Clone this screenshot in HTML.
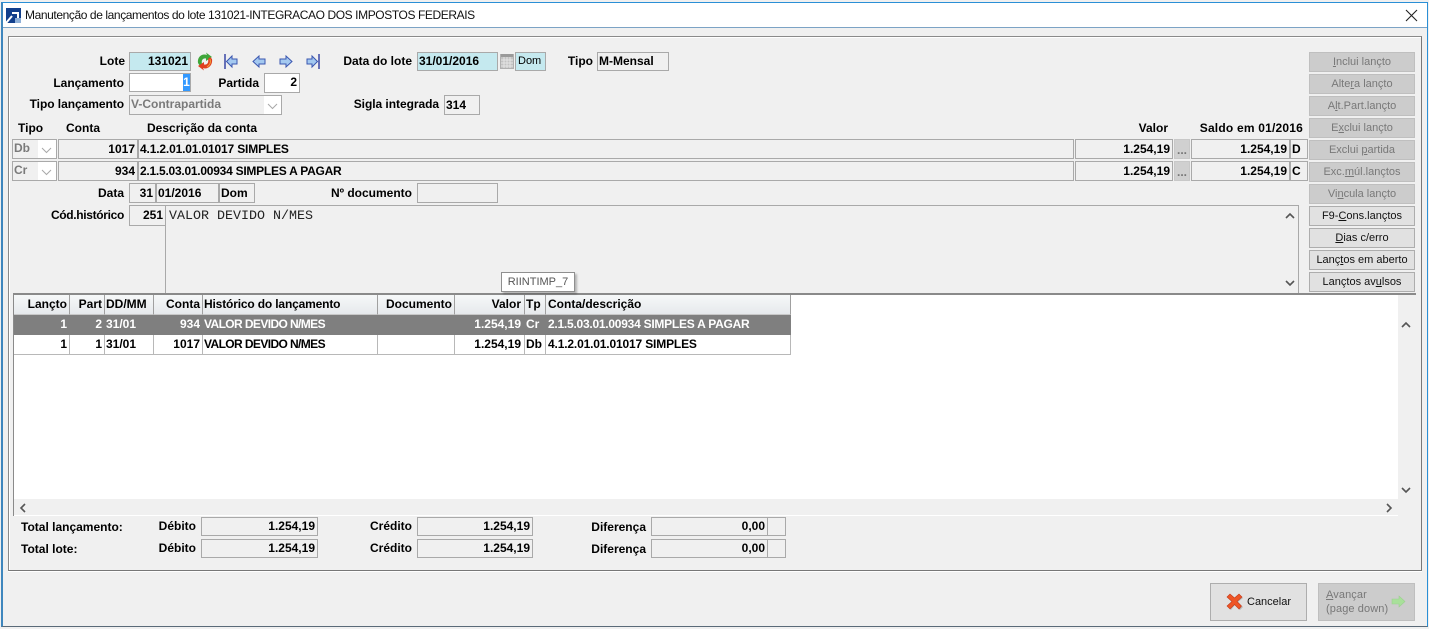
<!DOCTYPE html>
<html><head><meta charset="utf-8"><style>
html,body{margin:0;padding:0;background:#f0f0f0}
#w{position:relative;width:1429px;height:629px;overflow:hidden;background:#f0f0f0;font:bold 12px "Liberation Sans",sans-serif;color:#000}
#w div,#w svg{position:absolute;box-sizing:border-box}
.t{white-space:nowrap;line-height:14px}
.r{text-align:right}
.f{border:1px solid #a9a9a9;background:#f0f0f0;white-space:nowrap;line-height:16px;padding:0 2px 0 1px;overflow:hidden}
.y{line-height:18px}
.c{background:#c5e9ef}
.b{left:1309px;width:106px;height:20px;border:1px solid #adadad;background:#e1e1e1;text-align:center;font-weight:normal;font-size:11px;line-height:18px;color:#111}
.d{background:#cccccc;border-color:#bfbfbf;color:#787878}
.h{top:295px;height:20px;background:linear-gradient(#f6f8f9,#e6e9ec);border-right:1px solid #a0a0a0;border-bottom:1px solid #c8c8c8;line-height:18px;padding:0 2px 0 1px;white-space:nowrap;overflow:hidden}
.g{height:20px;border-right:1px solid #b8b8b8;border-bottom:1px solid #b8b8b8;line-height:18px;padding:0 2px 0 1px;white-space:nowrap;overflow:hidden;background:#fff}
.s{background:#7f7f7f;color:#fff;border-color:#7f7f7f}
.ar{text-align:right}
.n1{letter-spacing:-.16px}
.n2{letter-spacing:-.25px}
.n3{letter-spacing:-.6px}
</style></head><body><div id="w">
<!-- window -->
<div style="left:1px;top:2px;width:1427px;height:625px;border:1px solid #2a8fd6;border-bottom-color:#5a6a78;border-left-width:2px;border-left-color:#3e86bd"></div>
<div style="left:3px;top:3px;width:1424px;height:25px;background:#fff;border-bottom:1px solid #7ca3c5"></div>
<svg style="left:6px;top:8px" width="15" height="15" viewBox="0 0 15 15"><rect width="15" height="15" fill="#123f8c"/><path d="M0 15L6 8M6 5H12V11" stroke="#fff" stroke-width="2" fill="none"/><rect x="9" y="10" width="6" height="5" fill="#8fb0d8"/></svg>
<div class="t" style="left:25px;top:8px;font-weight:normal;font-size:12px;letter-spacing:-.405px;color:#111">Manutenção de lançamentos do lote 131021-INTEGRACAO DOS IMPOSTOS FEDERAIS</div>
<svg style="left:1405px;top:9px" width="13" height="13" viewBox="0 0 13 13"><path d="M1 1L12 12M12 1L1 12" stroke="#222" stroke-width="1.1"/></svg>
<!-- panel -->
<div style="left:8px;top:36px;width:1414px;height:535px;border:1px solid #8a8a8a;border-right-color:#777;border-bottom-color:#777;background:#f0f0f0;box-shadow:inset 1px 1px 0 #fff,0 1px 0 #fff"></div>
<!-- top fields -->
<div class="t r" style="right:1304px;top:54px">Lote</div>
<div class="f c r" style="left:129px;top:52px;width:62px;height:19px">131021</div>
<svg style="left:196px;top:52px" width="18" height="19" viewBox="0 0 18 19"><path d="M2 11C1 5 6 1 11 3L10 0.500L16 5L10 9V6.500C7 6 5 8 6 12L4 14Z" fill="#3fa63a"/><path d="M16 7C17 13 12 18 7 16L8 18.500L2 14L8 10V12.500C11 13 13 11 12 7L14 5Z" fill="#e0401f"/><path d="M14 7C15 10 14 13 11 15" stroke="#f2a03a" fill="none"/></svg>
<svg style="left:224px;top:53px" width="14" height="17" viewBox="0 0 14 17"><path d="M1 1V16" stroke="#2c3a9f" stroke-width="1.400"/><path d="M2.500 8.500L8 3V6H13V11H8V14Z" fill="#a4c9f0" stroke="#3a56b0"/></svg>
<svg style="left:252px;top:53px" width="14" height="17" viewBox="0 0 14 17"><path d="M1 8.500L7 3V6H13V11H7V14Z" fill="#a4c9f0" stroke="#3a56b0"/></svg>
<svg style="left:279px;top:53px" width="14" height="17" viewBox="0 0 14 17"><path d="M13 8.500L7 3V6H1V11H7V14Z" fill="#a4c9f0" stroke="#3a56b0"/></svg>
<svg style="left:306px;top:53px" width="14" height="17" viewBox="0 0 14 17"><path d="M13 1V16" stroke="#2c3a9f" stroke-width="1.400"/><path d="M11.500 8.500L6 3V6H1V11H6V14Z" fill="#a4c9f0" stroke="#3a56b0"/></svg>
<div class="t r" style="right:1017px;top:54px">Data do lote</div>
<div class="f c" style="left:417px;top:52px;width:81px;height:19px">31/01/2016</div>
<svg style="left:500px;top:53px" width="14" height="16" viewBox="0 0 14 16"><rect x=".5" y="1.500" width="13" height="14" fill="#c2c2c2" stroke="#b0b0b0"/><rect x="1" y="1" width="12" height="3" fill="#9a9a9a"/><path d="M1 7H13M1 10H13M1 13H13M4 4V15M7 4V15M10 4V15" stroke="#e4e4e4"/></svg>
<div class="f c" style="left:515px;top:52px;width:31px;height:19px;font-weight:normal;font-size:11px;padding-left:2px">Dom</div>
<div class="t r" style="right:836px;top:54px">Tipo</div>
<div class="f" style="left:597px;top:52px;width:72px;height:19px">M-Mensal</div>
<div class="t r" style="right:1305px;top:76px">Lançamento</div>
<div class="f" style="left:129px;top:73px;width:62px;height:19px;background:#fff"></div>
<div style="left:183px;top:74px;width:7px;height:17px;background:#3399ff;color:#fff;line-height:17px;text-align:center">1</div>
<div class="t r" style="right:1170px;top:76px">Partida</div>
<div class="f r" style="left:264px;top:73px;width:36px;height:20px;background:#fff">2</div>
<div class="t r" style="right:1305px;top:97px;letter-spacing:-.05px">Tipo lançamento</div>
<div class="f" style="left:129px;top:95px;width:153px;height:20px;color:#7a7a7a">V-Contrapartida</div>
<div style="left:264px;top:96px;width:17px;height:18px;background:#fff"></div>
<svg style="left:267px;top:103px" width="11" height="7" viewBox="0 0 11 7"><path d="M1 1L5.500 5.500L10 1" stroke="#a8a8a8" fill="none"/></svg>
<div class="t r" style="right:990px;top:97px;letter-spacing:-.05px">Sigla integrada</div>
<div class="f y" style="left:444px;top:95px;width:36px;height:20px">314</div>
<!-- account header -->
<div class="t" style="left:18px;top:121px">Tipo</div>
<div class="t" style="left:66px;top:121px">Conta</div>
<div class="t" style="left:147px;top:121px">Descrição da conta</div>
<div class="t r" style="right:261px;top:121px">Valor</div>
<div class="t r" style="right:126px;top:121px;letter-spacing:.2px">Saldo em 01/2016</div>
<!-- row 1 -->
<div class="f" style="left:12px;top:139px;width:45px;height:20px;color:#7a7a7a">Db</div>
<div style="left:38px;top:140px;width:18px;height:18px;background:#fff"></div>
<svg style="left:41px;top:147px" width="11" height="7" viewBox="0 0 11 7"><path d="M1 1L5.500 5.500L10 1" stroke="#a8a8a8" fill="none"/></svg>
<div class="f r y" style="left:58px;top:139px;width:80px;height:20px">1017</div>
<div class="f y n1" style="left:138px;top:139px;width:936px;height:20px">4.1.2.01.01.01017 SIMPLES</div>
<div class="f r y" style="left:1075px;top:139px;width:98px;height:20px">1.254,19</div>
<div class="f" style="left:1174px;top:139px;width:16px;height:20px;background:#d0d0d0;color:#777;padding:0 2px;border-color:#c8c8c8;line-height:20px">...</div>
<div class="f r y" style="left:1191px;top:139px;width:99px;height:20px">1.254,19</div>
<div class="f y" style="left:1290px;top:139px;width:18px;height:20px">D</div>
<!-- row 2 -->
<div class="f" style="left:12px;top:161px;width:45px;height:20px;color:#7a7a7a">Cr</div>
<div style="left:38px;top:162px;width:18px;height:18px;background:#fff"></div>
<svg style="left:41px;top:169px" width="11" height="7" viewBox="0 0 11 7"><path d="M1 1L5.500 5.500L10 1" stroke="#a8a8a8" fill="none"/></svg>
<div class="f r y" style="left:58px;top:161px;width:80px;height:20px">934</div>
<div class="f y n2" style="left:138px;top:161px;width:936px;height:20px">2.1.5.03.01.00934 SIMPLES A PAGAR</div>
<div class="f r y" style="left:1075px;top:161px;width:98px;height:20px">1.254,19</div>
<div class="f" style="left:1174px;top:161px;width:16px;height:20px;background:#d0d0d0;color:#777;padding:0 2px;border-color:#c8c8c8;line-height:20px">...</div>
<div class="f r y" style="left:1191px;top:161px;width:99px;height:20px">1.254,19</div>
<div class="f y" style="left:1290px;top:161px;width:18px;height:20px">C</div>
<!-- data -->
<div class="t r" style="right:1305px;top:186px">Data</div>
<div class="f r y" style="left:129px;top:183px;width:27px;height:20px">31</div>
<div class="f y" style="left:156px;top:183px;width:63px;height:20px">01/2016</div>
<div class="f y" style="left:219px;top:183px;width:36px;height:20px">Dom</div>
<div class="t r" style="right:1017px;top:186px">Nº documento</div>
<div class="f" style="left:417px;top:183px;width:81px;height:20px"></div>
<div class="t r" style="right:1305px;top:208px;letter-spacing:-.33px">Cód.histórico</div>
<div class="f r y" style="left:129px;top:205px;width:37px;height:21px">251</div>
<!-- memo -->
<div style="left:165px;top:205px;width:1134px;height:89px;border:1px solid #a9a9a9;background:#f0f0f0"></div>
<div class="t" style="left:169px;top:209px;font:13.33px/15px 'Liberation Mono',monospace;color:#222">VALOR DEVIDO N/MES</div>
<svg style="left:1285px;top:212px" width="10" height="7" viewBox="0 0 10 7"><path d="M1 6L5 2L9 6" stroke="#555" stroke-width="1.600" fill="none"/></svg>
<svg style="left:1285px;top:280px" width="10" height="7" viewBox="0 0 10 7"><path d="M1 1L5 5L9 1" stroke="#555" stroke-width="1.600" fill="none"/></svg>
<!-- buttons -->
<div class="b d" style="top:52px"><u>I</u>nclui lançto</div>
<div class="b d" style="top:74px">Alte<u>r</u>a lançto</div>
<div class="b d" style="top:96px">A<u>l</u>t.Part.lançto</div>
<div class="b d" style="top:118px">E<u>x</u>clui lançto</div>
<div class="b d" style="top:140px">Exclui <u>p</u>artida</div>
<div class="b d" style="top:162px">Exc.<u>m</u>úl.lançtos</div>
<div class="b d" style="top:184px">Vi<u>n</u>cula lançto</div>
<div class="b" style="top:206px">F9-<u>C</u>ons.lançtos</div>
<div class="b" style="top:228px"><u>D</u>ias c/erro</div>
<div class="b" style="top:250px">Lanç<u>t</u>os em aberto</div>
<div class="b" style="top:272px">Lançtos av<u>u</u>lsos</div>
<!-- grid -->
<div style="left:13px;top:293px;width:1403px;height:223px;background:#fff;border-top:2px solid #8a8a8a;border-left:1px solid #8a8a8a"></div>
<div style="left:1398px;top:295px;width:18px;height:221px;background:#f0f0f0"></div>
<div style="left:14px;top:499px;width:1402px;height:16px;background:#f0f0f0"></div>
<svg style="left:1401px;top:321px" width="10" height="7" viewBox="0 0 10 7"><path d="M1 6L5 2L9 6" stroke="#555" stroke-width="1.600" fill="none"/></svg>
<svg style="left:1401px;top:487px" width="10" height="7" viewBox="0 0 10 7"><path d="M1 1L5 5L9 1" stroke="#555" stroke-width="1.600" fill="none"/></svg>
<svg style="left:19px;top:503px" width="7" height="10" viewBox="0 0 7 10"><path d="M6 1L2 5L6 9" stroke="#555" stroke-width="1.600" fill="none"/></svg>
<svg style="left:1386px;top:503px" width="7" height="10" viewBox="0 0 7 10"><path d="M1 1L5 5L1 9" stroke="#555" stroke-width="1.600" fill="none"/></svg>
<div class="h ar" style="left:14px;width:56px">Lançto</div>
<div class="h ar" style="left:70px;width:35px">Part</div>
<div class="h" style="left:105px;width:49px">DD/MM</div>
<div class="h ar" style="left:154px;width:49px">Conta</div>
<div class="h n1" style="left:203px;width:175px">Histórico do lançamento</div>
<div class="h ar" style="left:378px;width:77px">Documento</div>
<div class="h ar" style="left:455px;width:70px;padding-right:3px">Valor</div>
<div class="h" style="left:525px;width:21px">Tp</div>
<div class="h" style="left:546px;width:245px;padding-left:2px">Conta/descrição</div>
<!-- row s -->
<div class="g s ar" style="left:14px;top:315px;width:56px">1</div>
<div class="g s ar" style="left:70px;top:315px;width:35px">2</div>
<div class="g s" style="left:105px;top:315px;width:49px">31/01</div>
<div class="g s ar" style="left:154px;top:315px;width:49px">934</div>
<div class="g s n3" style="left:203px;top:315px;width:175px">VALOR DEVIDO N/MES</div>
<div class="g s" style="left:378px;top:315px;width:77px"></div>
<div class="g s ar" style="left:455px;top:315px;width:70px;padding-right:3px">1.254,19</div>
<div class="g s" style="left:525px;top:315px;width:21px">Cr</div>
<div class="g s n2" style="left:546px;top:315px;width:245px;padding-left:2px">2.1.5.03.01.00934 SIMPLES A PAGAR</div>
<!-- row 2 -->
<div class="g ar" style="left:14px;top:335px;width:56px">1</div>
<div class="g ar" style="left:70px;top:335px;width:35px">1</div>
<div class="g" style="left:105px;top:335px;width:49px">31/01</div>
<div class="g ar" style="left:154px;top:335px;width:49px">1017</div>
<div class="g n3" style="left:203px;top:335px;width:175px">VALOR DEVIDO N/MES</div>
<div class="g" style="left:378px;top:335px;width:77px"></div>
<div class="g ar" style="left:455px;top:335px;width:70px;padding-right:3px">1.254,19</div>
<div class="g" style="left:525px;top:335px;width:21px">Db</div>
<div class="g n1" style="left:546px;top:335px;width:245px;padding-left:2px">4.1.2.01.01.01017 SIMPLES</div>
<!-- tooltip -->
<div style="left:501px;top:272px;width:74px;height:20px;background:#fff;border:1px solid #8f8f8f;box-shadow:2px 2px 2px rgba(0,0,0,.25);font-weight:normal;font-size:11px;line-height:18px;text-align:center;color:#555">RIINTIMP_7</div>
<!-- totals -->
<div class="t" style="left:21px;top:520px">Total lançamento:</div>
<div class="t" style="left:21px;top:542px">Total lote:</div>
<div class="t r" style="right:1233px;top:519px">Débito</div>
<div class="t r" style="right:1233px;top:541px">Débito</div>
<div class="f r" style="left:201px;top:517px;width:117px;height:19px">1.254,19</div>
<div class="f r" style="left:201px;top:539px;width:117px;height:19px">1.254,19</div>
<div class="t r" style="right:1017px;top:519px">Crédito</div>
<div class="t r" style="right:1017px;top:541px">Crédito</div>
<div class="f r" style="left:417px;top:517px;width:116px;height:19px">1.254,19</div>
<div class="f r" style="left:417px;top:539px;width:116px;height:19px">1.254,19</div>
<div class="t r" style="right:783px;top:520px">Diferença</div>
<div class="t r" style="right:783px;top:542px">Diferença</div>
<div class="f r" style="left:651px;top:517px;width:117px;height:19px">0,00</div>
<div class="f r" style="left:651px;top:539px;width:117px;height:19px">0,00</div>
<div class="f" style="left:767px;top:517px;width:19px;height:19px"></div>
<div class="f" style="left:767px;top:539px;width:19px;height:19px"></div>
<!-- bottom buttons -->
<div style="left:1210px;top:583px;width:97px;height:38px;border:1px solid #adadad;background:#e1e1e1"></div>
<svg style="left:1226px;top:593px" width="18" height="18" viewBox="0 0 18 18"><path d="M2 5L5 2L9 6L14 2L17 5L12 9L17 14L14 17L9 12L5 17L2 14L6 9Z" fill="#888" opacity=".45"/><path d="M1 4L4 1L8.500 5L13 1L16 4L11 8.500L15.500 13L13 16L8.500 11.500L4 16L1 13L6 8.500Z" fill="#ee5526" stroke="#c23a1a" stroke-width=".6"/></svg>
<div class="t" style="left:1247px;top:595px;font-weight:normal;font-size:11px;color:#111">Cancelar</div>
<div style="left:1318px;top:583px;width:97px;height:38px;border:1px solid #bfbfbf;background:#cccccc"></div>
<div class="t" style="left:1326px;top:588px;font-weight:normal;font-size:11px;color:#787878;letter-spacing:.1px"><u>A</u>vançar</div>
<div class="t" style="left:1326px;top:602px;font-weight:normal;font-size:11px;color:#787878;letter-spacing:.1px">(page down)</div>
<svg style="left:1391px;top:595px" width="15" height="13" viewBox="0 0 15 13"><path d="M1 4H8V1L14 6.500L8 12V9H1Z" fill="#a8e09a" stroke="#9ccf90" stroke-width=".6"/></svg>
</div></body></html>
